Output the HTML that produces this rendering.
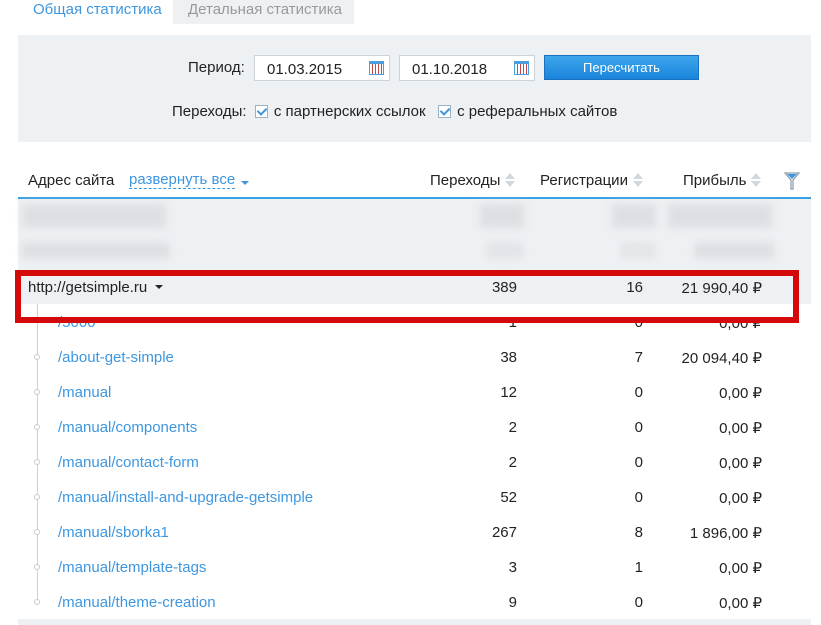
<!DOCTYPE html>
<html><head><meta charset="utf-8"><style>
*{margin:0;padding:0;box-sizing:border-box}
body{width:821px;height:625px;background:#fff;font-family:"Liberation Sans",sans-serif;font-size:15px;color:#222;position:relative;overflow:hidden}
.a{position:absolute;white-space:nowrap}
.blue{color:#3d97e0}
.r{text-align:right}
.blur{position:absolute;background:#dde0e3;filter:blur(4px)}
.inp{position:absolute;top:55px;height:26px;border:1px solid #cdd3d8;background:#fff;padding:5px 0 0 12px;font-size:15px}
.cal{position:absolute;right:5px;top:5px;width:15px;height:14px;border:1px solid #4a9ee0;border-top-width:3px;background:repeating-linear-gradient(90deg,#fff 0 2px,#c04a4a 2px 3px)}
.chk{display:inline-block;width:13px;height:13px;border:1px solid #9fb0c0;background:#fff;vertical-align:-2px;margin-right:6px;position:relative}
.chk:after{content:"";position:absolute;left:3px;top:0px;width:4px;height:7px;border:solid #3d97e0;border-width:0 2px 2px 0;transform:rotate(45deg)}
.sort{display:inline-block;width:10px;height:14px;vertical-align:-2px;margin-left:5px;position:relative}
.sort:before{content:"";position:absolute;left:0;top:0;border:5px solid transparent;border-bottom:6px solid #d3d8dc;border-top:0}
.sort:after{content:"";position:absolute;left:0;top:8px;border:5px solid transparent;border-top:6px solid #d3d8dc;border-bottom:0}
.row{position:absolute;left:0;width:821px;height:20px}
.row .a{top:2px}
.row .dot{top:7px}
.dot{position:absolute;left:34px;width:6px;height:6px;border:1px solid #c5ccd3;border-radius:50%;background:#fff}
.car{display:inline-block;border:4px solid transparent;border-top:4px solid #222;margin-left:8px;vertical-align:-1px}
</style></head><body>
<div class="a blue" style="left:33px;top:1px">Общая статистика</div>
<div class="a" style="left:173px;top:0;width:181px;height:24px;background:#eef1f4;color:#999;padding:1px 0 0 15px">Детальная статистика</div>
<div class="a" style="left:18px;top:35px;width:793px;height:107px;background:#eef1f4"></div>
<div class="a" style="left:188px;top:59px">Период:</div>
<div class="inp" style="left:254px;width:136px">01.03.2015<span class="cal"></span></div>
<div class="inp" style="left:399px;width:136px">01.10.2018<span class="cal"></span></div>
<div class="a" style="left:544px;top:55px;width:155px;height:25px;background:linear-gradient(#3ea6ec,#1a84dc);border:1px solid #1a72c0;color:#fff;text-align:center;font-size:13px;padding-top:4px">Пересчитать</div>
<div class="a" style="left:172px;top:103px">Переходы: &nbsp;<span class="chk"></span>с партнерских ссылок &nbsp;&nbsp;<span class="chk"></span>с реферальных сайтов</div>
<div class="a" style="left:28px;top:172px">Адрес сайта</div>
<div class="a blue" style="left:129px;top:172px;border-bottom:1px dashed #3d97e0;line-height:16px">развернуть все</div>
<div class="a" style="left:241px;top:181px;border:4px solid transparent;border-top:4px solid #3d97e0"></div>
<div class="a" style="left:430px;top:172px">Переходы<span class="sort"></span></div>
<div class="a" style="left:540px;top:172px">Регистрации<span class="sort"></span></div>
<div class="a" style="left:683px;top:172px">Прибыль<span class="sort"></span></div>
<svg class="a" style="left:784px;top:172px" width="16" height="18" viewBox="0 0 16 18"><path d="M1 1 L15 1 L9 8 L9 17 L7 17 L7 8 Z" fill="none" stroke="#8a9aa8" stroke-width="1.2"/><path d="M3 2 L13 2 L8 7Z" fill="#3d97e0"/></svg>
<div class="a" style="left:18px;top:197px;width:793px;height:2px;background:#3aa0e4"></div>
<div class="a" style="left:18px;top:199px;width:793px;height:105px;background:#eef1f4"></div>
<div class="blur" style="left:22px;top:204px;width:144px;height:24px"></div>
<div class="blur" style="left:480px;top:204px;width:44px;height:24px"></div>
<div class="blur" style="left:612px;top:204px;width:44px;height:24px"></div>
<div class="blur" style="left:668px;top:204px;width:104px;height:24px"></div>
<div class="blur" style="left:22px;top:242px;width:148px;height:17px"></div>
<div class="blur" style="left:486px;top:242px;width:38px;height:17px;opacity:.7"></div>
<div class="blur" style="left:620px;top:242px;width:36px;height:17px;opacity:.6"></div>
<div class="blur" style="left:694px;top:242px;width:80px;height:17px"></div>
<div class="a" style="left:37px;top:304px;width:1px;height:300px;background:#c9d0d6"></div>
<div class="row" style="top:277px"><span class="a" style="left:28px">http://getsimple.ru<span class="car"></span></span><span class="a r" style="right:304px">389</span><span class="a r" style="right:178px">16</span><span class="a r" style="right:59px">21 990,40 ₽</span></div>
<div class="row" style="top:312px"><span class="a blue" style="left:58px">/5000</span><span class="a r" style="right:304px">1</span><span class="a r" style="right:178px">0</span><span class="a r" style="right:59px">0,00 ₽</span></div>
<div class="row" style="top:347px"><span class="dot"></span><span class="a blue" style="left:58px">/about-get-simple</span><span class="a r" style="right:304px">38</span><span class="a r" style="right:178px">7</span><span class="a r" style="right:59px">20 094,40 ₽</span></div>
<div class="row" style="top:382px"><span class="dot"></span><span class="a blue" style="left:58px">/manual</span><span class="a r" style="right:304px">12</span><span class="a r" style="right:178px">0</span><span class="a r" style="right:59px">0,00 ₽</span></div>
<div class="row" style="top:417px"><span class="dot"></span><span class="a blue" style="left:58px">/manual/components</span><span class="a r" style="right:304px">2</span><span class="a r" style="right:178px">0</span><span class="a r" style="right:59px">0,00 ₽</span></div>
<div class="row" style="top:452px"><span class="dot"></span><span class="a blue" style="left:58px">/manual/contact-form</span><span class="a r" style="right:304px">2</span><span class="a r" style="right:178px">0</span><span class="a r" style="right:59px">0,00 ₽</span></div>
<div class="row" style="top:487px"><span class="dot"></span><span class="a blue" style="left:58px">/manual/install-and-upgrade-getsimple</span><span class="a r" style="right:304px">52</span><span class="a r" style="right:178px">0</span><span class="a r" style="right:59px">0,00 ₽</span></div>
<div class="row" style="top:522px"><span class="dot"></span><span class="a blue" style="left:58px">/manual/sborka1</span><span class="a r" style="right:304px">267</span><span class="a r" style="right:178px">8</span><span class="a r" style="right:59px">1 896,00 ₽</span></div>
<div class="row" style="top:557px"><span class="dot"></span><span class="a blue" style="left:58px">/manual/template-tags</span><span class="a r" style="right:304px">3</span><span class="a r" style="right:178px">1</span><span class="a r" style="right:59px">0,00 ₽</span></div>
<div class="row" style="top:592px"><span class="dot"></span><span class="a blue" style="left:58px">/manual/theme-creation</span><span class="a r" style="right:304px">9</span><span class="a r" style="right:178px">0</span><span class="a r" style="right:59px">0,00 ₽</span></div>
<div class="a" style="left:18px;top:619px;width:793px;height:6px;background:#eef1f4"></div>
<div class="a" style="left:15px;top:270px;width:784px;height:53px;border:6px solid #d40a0a"></div>
</body></html>
